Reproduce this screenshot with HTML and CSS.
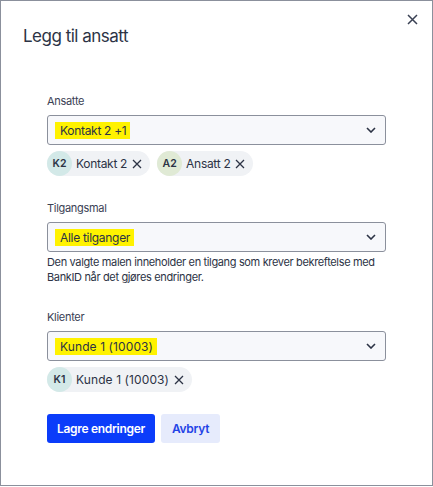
FILE: index.html
```html
<!DOCTYPE html>
<html lang="no">
<head>
    <meta charset="UTF-8">
    <meta name="viewport" content="width=device-width, initial-scale=1.0">
    <title>Legg til ansatt</title>
    <link rel="stylesheet" href="styles.css">
</head>
<body>
    <div class="modal">
        <div class="modal-header">
            <h2 class="title">Legg til ansatt</h2>
            <button class="close" aria-label="Lukk">
                <svg width="11" height="11" viewBox="0 0 11 11"><path d="M1 1L10 10M10 1L1 10" stroke="#3a4154" stroke-width="1.5" fill="none"/></svg>
            </button>
        </div>
        <div class="modal-body">
            <div class="field">
                <div class="label">Ansatte</div>
                <div class="select">
                    <span class="mark">Kontakt 2 +1</span>
                    <svg class="chevron" width="10" height="6" viewBox="0 0 10 6"><path d="M1 1L5 5L9 1" stroke="#2c3345" stroke-width="1.6" fill="none"/></svg>
                </div>
                <div class="chips">
                    <span class="chip"><span class="avatar teal">K2</span>Kontakt 2<svg class="remove" width="10" height="10" viewBox="0 0 10 10"><path d="M1 1L9 9M9 1L1 9" stroke="#2c3345" stroke-width="1.3" fill="none"/></svg></span>
                    <span class="chip"><span class="avatar green">A2</span>Ansatt 2<svg class="remove" width="10" height="10" viewBox="0 0 10 10"><path d="M1 1L9 9M9 1L1 9" stroke="#2c3345" stroke-width="1.3" fill="none"/></svg></span>
                </div>
            </div>
            <div class="field">
                <div class="label">Tilgangsmal</div>
                <div class="select">
                    <span class="mark">Alle tilganger</span>
                    <svg class="chevron" width="10" height="6" viewBox="0 0 10 6"><path d="M1 1L5 5L9 1" stroke="#2c3345" stroke-width="1.6" fill="none"/></svg>
                </div>
                <p class="help">Den valgte malen inneholder en tilgang som krever bekreftelse med BankID når det gjøres endringer.</p>
            </div>
            <div class="field">
                <div class="label">Klienter</div>
                <div class="select">
                    <span class="mark wide">Kunde 1 (10003)</span>
                    <svg class="chevron" width="10" height="6" viewBox="0 0 10 6"><path d="M1 1L5 5L9 1" stroke="#2c3345" stroke-width="1.6" fill="none"/></svg>
                </div>
                <div class="chips">
                    <span class="chip"><span class="avatar teal">K1</span><span class="wide">Kunde 1 (10003)</span><svg class="remove" width="10" height="10" viewBox="0 0 10 10"><path d="M1 1L9 9M9 1L1 9" stroke="#2c3345" stroke-width="1.3" fill="none"/></svg></span>
                </div>
            </div>
            <div class="actions">
                <button class="btn primary">Lagre endringer</button>
                <button class="btn secondary">Avbryt</button>
            </div>
        </div>
    </div>
</body>
</html>
```

FILE: styles.css
```css
body {
    margin: 0;
    font-family: Inter, "Noto Sans", sans-serif;
    color: #2c3345;
    background: #ffffff;
}

.modal {
    position: relative;
    height: 486px;
    box-sizing: border-box;
    border: 1px solid #8b909c;
    background: #ffffff;
}

.modal-header {
    padding: 23px 22px 0;
}

.title {
    margin: 0;
    font-size: 17px;
    line-height: 24px;
    font-weight: 400;
    letter-spacing: -0.5px;
    color: #2c3345;
}

.close {
    position: absolute;
    top: 11px;
    right: 13px;
    width: 14px;
    height: 14px;
    padding: 0;
    border: none;
    background: none;
    display: flex;
    align-items: center;
    justify-content: center;
    cursor: pointer;
}

.modal-body {
    padding: 45px 46px 0;
}

.field {
    margin-bottom: 24px;
}

.label {
    font-size: 11px;
    line-height: 16px;
    letter-spacing: -0.3px;
    color: #3a4154;
    margin-bottom: 6px;
}

.select {
    height: 30px;
    box-sizing: border-box;
    border: 1px solid #8b909c;
    border-radius: 3px;
    background: #f7f8fb;
    display: flex;
    align-items: center;
    justify-content: space-between;
    padding: 0 9px 0 7px;
}

.mark {
    background: #fff200;
    font-size: 12px;
    line-height: 17px;
    letter-spacing: -0.3px;
    padding: 0 4px 0 5px;
    color: #2c3345;
}

.wide {
    letter-spacing: 0.1px;
}

.chips {
    display: flex;
    gap: 7px;
    margin-top: 6px;
}

.chip {
    display: flex;
    align-items: center;
    height: 25px;
    background: #f0f2f5;
    border-radius: 13px;
    font-size: 12px;
    letter-spacing: -0.3px;
    padding-right: 8px;
}

.avatar {
    width: 25px;
    height: 25px;
    border-radius: 50%;
    display: flex;
    align-items: center;
    justify-content: center;
    font-size: 10.5px;
    font-weight: 600;
    letter-spacing: 0;
    margin-right: 4px;
}

.avatar.teal {
    background: #d3e9e8;
}

.avatar.green {
    background: #e0ead5;
}

.remove {
    margin-left: 5px;
}

.help {
    margin: 3px 0 0;
    font-size: 11px;
    line-height: 15px;
    letter-spacing: -0.35px;
    color: #2c3345;
}

.actions {
    display: flex;
    gap: 6px;
    margin-top: -2px;
}

.btn {
    height: 29px;
    border: none;
    border-radius: 3px;
    font-family: inherit;
    font-size: 12px;
    font-weight: 600;
    letter-spacing: -0.3px;
    padding: 0 10px;
    cursor: pointer;
}

.btn.primary {
    background: #0b3cfa;
    color: #ffffff;
}

.btn.secondary {
    background: #e6ebfc;
    color: #1f43e6;
    padding: 0 11px;
}
```
